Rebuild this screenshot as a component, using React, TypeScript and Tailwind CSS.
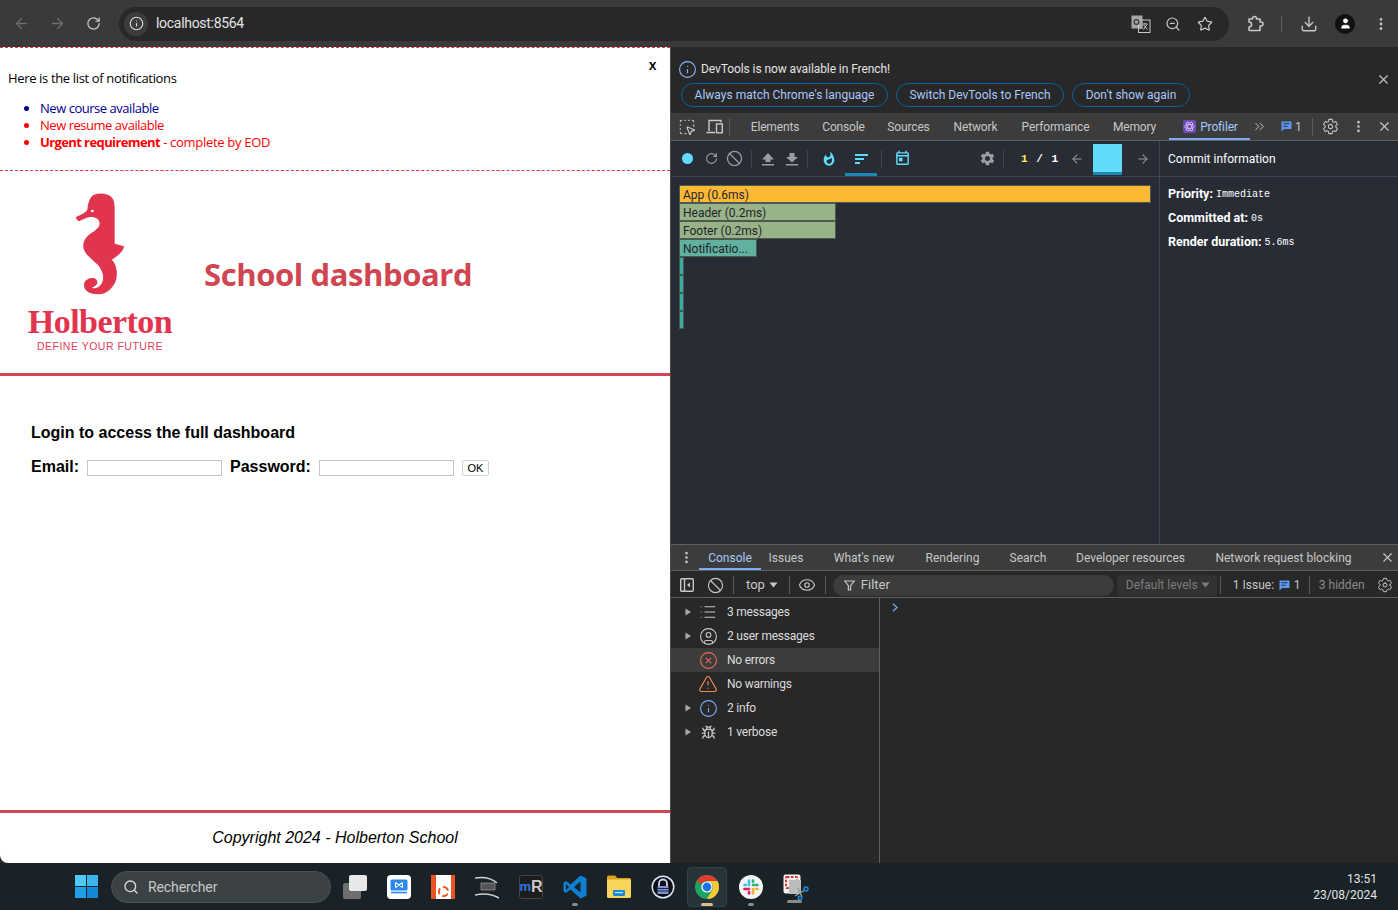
import {
  ArrowLeft,
  ArrowRight,
  RotateCw,
  Info,
  ZoomOut,
  Star,
  Download,
  User,
  EllipsisVertical,
  X,
  ChevronsRight,
  Ban,
  Eye,
  List,
  CircleUser,
  CircleX,
  TriangleAlert,
  Bug,
  Search,
  SquareDashedMousePointer,
} from "lucide-react";
import { MdSettings, MdWhatshot, MdOutlineToday } from "react-icons/md";
import { IoSettingsOutline } from "react-icons/io5";

const uiFont = "font-['Roboto','Liberation_Sans',sans-serif]";

const Divider = ({ className }: { className: string }) => (
  <div className={`w-px h-[18px] bg-[#5a5a5a] shrink-0 ${className}`} />
);

const Caret = ({ className }: { className: string }) => (
  <svg width="8" height="8" viewBox="0 0 8 8" className={className}>
    <path d="M1.5 0.5 L7 4 L1.5 7.5 Z" fill="#a8a8a8" />
  </svg>
);

const DownCaret = ({ className }: { className: string }) => (
  <svg width="9" height="6" viewBox="0 0 9 6" className={className}>
    <path d="M0.5 0.5 H8.5 L4.5 5.5 Z" fill="currentColor" />
  </svg>
);

const IssueIcon = ({ className }: { className: string }) => (
  <svg width="11" height="11" viewBox="0 0 11 11" className={`shrink-0 ${className}`}>
    <path d="M0.5 0.5 H10.5 V8 H3 L0.5 10.5 Z" fill="#5f97f0" />
    <path d="M2.5 2.8 H8.5 M2.5 5.2 H6.5" stroke="#20304c" strokeWidth="1.1" />
  </svg>
);

const TranslateIcon = () => (
  <svg width="20" height="18" viewBox="0 0 20 18">
    <rect x="0.5" y="0.5" width="11" height="13" fill="#a6a6a6" />
    <rect x="7.5" y="5" width="11.5" height="12.5" fill="none" stroke="#c7c7c7" />
    <path d="M8.3 5 H11.5 V14 H8.3 Z" fill="#a6a6a6" />
    <circle cx="5.5" cy="7" r="2.4" fill="none" stroke="#333" strokeWidth="1.2" />
    <path d="M11.5 9 H16.5 M14 8 V9 M12.5 14.5 L16 9.5 M12.5 9.8 L16.5 14.5" stroke="#c7c7c7" strokeWidth="1" fill="none" />
  </svg>
);

const ExtensionIcon = ({ className }: { className: string }) => (
  <svg width="18" height="18" viewBox="0 0 18 18" className={className}>
    <path
      d="M3 4 H6.5 V3.5 a2 2 0 0 1 4 0 V4 H14 V7 H15 a2 2 0 0 1 0 4 H14 V15.5 H3.5 L3 15 V12 a2.5 2.5 0 0 0 0 -5 Z"
      fill="none"
      stroke="currentColor"
      strokeWidth="1.6"
      strokeLinejoin="round"
    />
  </svg>
);

const DeviceIcon = ({ className }: { className: string }) => (
  <svg width="17" height="15" viewBox="0 0 17 15" className={className}>
    <path d="M3 12 V1.5 H15 V3.5 M0.5 13.5 H9" fill="none" stroke="#c7c7c7" strokeWidth="1.4" />
    <rect x="10.5" y="5" width="5.8" height="8.8" fill="none" stroke="#c7c7c7" strokeWidth="1.4" />
  </svg>
);

const PanelIcon = ({ className }: { className: string }) => (
  <svg width="14" height="14" viewBox="0 0 14 14" className={className}>
    <rect x="0.7" y="0.7" width="12.6" height="12.6" rx="1" fill="none" stroke="#c7c7c7" strokeWidth="1.4" />
    <path d="M4.5 1 V13" stroke="#c7c7c7" strokeWidth="1.4" />
    <path d="M10 4.5 V9.5 L7 7 Z" fill="#c7c7c7" />
  </svg>
);

const Seahorse = () => (
  <svg width="50" height="102" viewBox="225 38 150 306" className="shrink-0">
    <path
      d="M228 110 C240 104 256 98 262 88 C264 70 268 50 282 43 C300 37 325 39 336 52 C344 62 344 75 344 90 L344 190 L372 198 C370 214 352 228 335 238 C348 250 352 270 350 290 C346 318 322 342 295 342 C270 342 252 332 252 315 C252 300 266 291 280 293 C293 295 296 310 286 316 C282 319 278 320 276 322 C288 327 300 320 306 308 C314 290 308 272 294 254 C280 240 258 226 251 205 C246 186 258 168 274 158 C290 148 302 138 298 124 C294 112 278 108 265 111 C254 114 244 120 238 122 C232 122 228 116 228 110 Z"
      fill="#e0344f"
    />
    <circle cx="277" cy="92" r="4" fill="#ffffff" />
  </svg>
);

const Notifications = () => (
  <div className="relative h-[124px] border-y border-dashed border-[#e0344f] font-['Open_Sans','Noto_Sans',sans-serif] tracking-[-0.35px] text-[13px] text-black">
    <button className="absolute right-[14px] top-[8px] text-[14px] font-semibold leading-[18px]">x</button>
    <p className="pl-2 pt-[21px] leading-[18px]">Here is the list of notifications</p>
    <ul className="mt-[13px] pl-10 list-disc leading-[17px]">
      <li className="text-[#00008b] tracking-[-0.47px]">New course available</li>
      <li className="text-[#ff0000] tracking-[-0.47px]">New resume available</li>
      <li className="text-[#ff0000] tracking-[-0.3px]">
        <strong className="tracking-[-0.6px]">Urgent requirement</strong> - complete by EOD
      </li>
    </ul>
  </div>
);

const Logo = () => (
  <div className="w-[200px] h-full flex flex-col items-center pt-[22px] shrink-0">
    <Seahorse />
    <div className="mt-[7px] font-['Liberation_Serif',serif] font-bold text-[34px] leading-[40px] tracking-[-0.55px] text-[#e0344f]">Holberton</div>
    <div className="-mt-[2px] font-['Liberation_Sans',sans-serif] text-[10.5px] leading-[13px] tracking-[0.5px] text-[#e0405c]">DEFINE YOUR FUTURE</div>
  </div>
);

const LeftPage = () => (
  <div className="w-[670px] h-full flex flex-col bg-white rounded-bl-lg overflow-hidden shrink-0">
    <Notifications />
    <header className="h-[205px] flex items-center border-b-[3px] border-[#cf4550] shrink-0">
      <Logo />
      <h1 className="ml-[4px] mt-[4px] font-['Open_Sans','Noto_Sans',sans-serif] font-bold text-[31px] tracking-[-0.4px] text-[#cf4550]">School dashboard</h1>
    </header>
    <main className="flex-1 pl-[31px] pt-[47px] font-['Liberation_Sans',sans-serif] text-black">
      <p className="font-bold text-[16px] leading-[20px]">Login to access the full dashboard</p>
      <div className="mt-[14px] flex items-center font-bold text-[16px] leading-[20px]">
        <label>Email:</label>
        <input className="ml-[8px] mt-[2px] w-[135px] h-[16px] border border-[#c4c4c4] bg-white" />
        <label className="ml-[8px]">Password:</label>
        <input className="ml-[8px] mt-[2px] w-[135px] h-[16px] border border-[#c4c4c4] bg-white" />
        <button className="ml-[8px] mt-[2px] w-[27px] h-[16px] rounded-[2px] border border-[#d0d0d0] bg-white font-normal text-[11px] leading-[14px]">OK</button>
      </div>
    </main>
    <footer className="h-[53px] border-t-[3px] border-[#cf4550] flex items-center justify-center font-['Liberation_Sans',sans-serif] italic text-[16px] text-black shrink-0">
      Copyright 2024 - Holberton School
    </footer>
  </div>
);

const BrowserBar = () => (
  <div className="h-[47px] bg-[#3a3a3a] flex items-center shrink-0 text-[#c7c7c7]">
    <ArrowLeft size={17} strokeWidth={1.8} className="ml-[13px] text-[#6d6d6d]" />
    <ArrowRight size={17} strokeWidth={1.8} className="ml-[19px] text-[#6d6d6d]" />
    <RotateCw size={15} strokeWidth={2} className="ml-[20px]" />
    <div className="ml-[18px] w-[1110px] h-[34px] rounded-full bg-[#282828] flex items-center pl-[5px]">
      <div className="w-[24px] h-[24px] rounded-full bg-[#3c3c3c] flex items-center justify-center">
        <Info size={15} strokeWidth={1.8} className="text-[#dcdcdc]" />
      </div>
      <span className={`ml-[8px] text-[14px] tracking-[-0.3px] text-[#e3e3e3] ${uiFont}`}>localhost:8564</span>
      <div className="ml-auto flex items-center mr-[16px]">
        <TranslateIcon />
        <ZoomOut size={16} strokeWidth={1.8} className="ml-[14px]" />
        <Star size={16} strokeWidth={1.8} className="ml-[16px]" />
      </div>
    </div>
    <ExtensionIcon className="ml-[17px]" />
    <div className="ml-[17px] w-px h-[16px] bg-[#606060]" />
    <Download size={18} strokeWidth={1.8} className="ml-[18px]" />
    <div className="ml-[17px] w-[20px] h-[20px] rounded-full bg-[#111] flex items-center justify-center">
      <User size={13} fill="#ffffff" strokeWidth={1} className="text-white" />
    </div>
    <EllipsisVertical size={16} strokeWidth={2.2} className="ml-[18px]" />
  </div>
);

const mainTabs = [
  { label: "Elements", w: "w-[70px]" },
  { label: "Console", w: "w-[67px]" },
  { label: "Sources", w: "w-[63px]" },
  { label: "Network", w: "w-[71px]" },
  { label: "Performance", w: "w-[89px]" },
  { label: "Memory", w: "w-[69px]" },
];

const InfoBar = () => (
  <div className="h-[66px] bg-[#282828] relative shrink-0 pl-[7px] pt-[13px]">
    <div className="flex items-center h-[18px]">
      <Info size={19} strokeWidth={1.4} className="text-[#8ab4f8]" />
      <span className="ml-[4px] tracking-[-0.08px] text-[#e3e3e3]">DevTools is now available in French!</span>
    </div>
    <div className="flex mt-[5px] ml-[3px] gap-[8px] text-[#a8c7fa]">
      <button className="h-[24px] w-[207px] rounded-full border border-[#06639c]">Always match Chrome's language</button>
      <button className="h-[24px] w-[168px] rounded-full border border-[#06639c]">Switch DevTools to French</button>
      <button className="h-[24px] w-[118px] rounded-full border border-[#06639c]">Don't show again</button>
    </div>
    <X size={15} strokeWidth={1.8} className="absolute right-[7px] top-[25px] text-[#c7c7c7]" />
  </div>
);

const MainTabs = () => (
  <div className="h-[28px] bg-[#3c3c3c] border-b border-[#5f5f5f] flex items-center shrink-0 text-[#c7c7c7]">
    <SquareDashedMousePointer size={18} strokeWidth={1.5} className="ml-[7px]" />
    <DeviceIcon className="ml-[10px]" />
    <Divider className="ml-[6px]" />
    <div className="flex h-full ml-[10px] tracking-[-0.15px]">
      {mainTabs.map((t) => (
        <div key={t.label} className={`${t.w} flex items-center justify-center`}>{t.label}</div>
      ))}
      <div className="w-[81px] flex items-center justify-center border-b-2 border-[#7cacf8] pt-[2px] pl-[2px] text-[#a8c7fa]">
        <svg width="13" height="13" viewBox="0 0 13 13" className="mr-[4px]">
          <rect width="13" height="13" rx="2" fill="#6f4bb8" />
          <g fill="none" stroke="#d9c8ff" strokeWidth="0.8">
            <ellipse cx="6.5" cy="6.5" rx="5" ry="2" />
            <ellipse cx="6.5" cy="6.5" rx="5" ry="2" transform="rotate(60 6.5 6.5)" />
            <ellipse cx="6.5" cy="6.5" rx="5" ry="2" transform="rotate(120 6.5 6.5)" />
          </g>
        </svg>
        Profiler
      </div>
    </div>
    <ChevronsRight size={15} strokeWidth={1.6} className="ml-[2px]" />
    <IssueIcon className="ml-[14px]" />
    <span className="ml-[3px]">1</span>
    <Divider className="ml-[10px]" />
    <IoSettingsOutline size={17} className="ml-[9px]" />
    <EllipsisVertical size={15} strokeWidth={2.2} className="ml-[12px]" />
    <X size={15} strokeWidth={1.8} className="ml-[11px]" />
  </div>
);

const ProfilerToolbar = () => (
  <div className="h-[36px] bg-[#282c34] border-b border-[#3e4452] flex shrink-0 text-[#9a9da3]">
    <div className="w-[488px] flex items-center">
      <div className="ml-[11px] w-[11px] h-[11px] rounded-full bg-[#61dafb]" />
      <RotateCw size={13} strokeWidth={2} className="ml-[12px]" />
      <Ban size={17} strokeWidth={1.8} className="ml-[8px]" />
      <div className="ml-[8px] w-px h-[18px] bg-[#3e4452]" />
      <svg width="14" height="14" viewBox="0 0 14 14" className="ml-[9px]">
        <path d="M7 1 L13 7.5 H9.5 V10 H4.5 V7.5 H1 Z M1 12 H13 V13.5 H1 Z" fill="currentColor" />
      </svg>
      <svg width="14" height="14" viewBox="0 0 14 14" className="ml-[10px]">
        <path d="M4.5 1 H9.5 V5 H13 L7 10.5 L1 5 H4.5 Z M1 12 H13 V13.5 H1 Z" fill="currentColor" />
      </svg>
      <div className="ml-[8px] w-px h-[18px] bg-[#3e4452]" />
      <MdWhatshot size={16} className="ml-[13px] text-[#61dafb]" />
      <div className="ml-[8px] w-[32px] h-full flex items-center justify-center border-b-[3px] border-[#1a8ab5] pt-[3px]">
        <svg width="13" height="12" viewBox="0 0 13 12">
          <path d="M0 1 H13 V3 H0 Z M0 5 H9 V7 H0 Z M0 9 H5 V11 H0 Z" fill="#61dafb" />
        </svg>
      </div>
      <div className="ml-[4px] w-px h-[18px] bg-[#3e4452]" />
      <MdOutlineToday size={17} className="ml-[12px] text-[#61dafb]" />
      <MdSettings size={17} className="ml-[68px]" />
      <div className="ml-[7px] w-px h-[18px] bg-[#3e4452]" />
      <div className="ml-[17px] w-[37px] pt-[2px] flex justify-between font-['Liberation_Mono',monospace] font-bold text-[11px] text-white">
        <span className="text-[#ffee55]">1</span>
        <span>/</span>
        <span>1</span>
      </div>
      <ArrowLeft size={14} strokeWidth={1.8} className="ml-[12px]" />
      <div className="ml-[9px] w-[29px] h-[31px] bg-[#61dafb] border-b-[3px] border-[#1a8ab5] self-end mb-[1px]" />
      <ArrowRight size={14} strokeWidth={1.8} className="ml-[14px]" />
    </div>
    <div className="flex-1 border-l border-[#3e4452] pl-[8px] flex items-center text-white">Commit information</div>
  </div>
);

const FlameRow = ({ w, bg, label }: { w: string; bg: string; label: string }) => (
  <div className={`${w} ${bg} h-[18px] border border-[#4a5a50] pl-[3px] leading-[18px] text-[#1f242c] overflow-hidden whitespace-nowrap`}>
    {label}
  </div>
);

const CommitRow = ({ label, value }: { label: string; value: string }) => (
  <div className="h-[24px] flex items-center gap-[3px]">
    <b className="font-bold text-[12.5px]">{label}</b>
    <span className="font-['Liberation_Mono',monospace] text-[10px]">{value}</span>
  </div>
);

const ProfilerBody = () => (
  <div className="h-[367px] bg-[#282c34] flex shrink-0">
    <div className="w-[488px] pl-[8px] pt-[8px] flex flex-col">
      <FlameRow w="w-[472px]" bg="bg-[#fdb934]" label="App (0.6ms)" />
      <FlameRow w="w-[157px]" bg="bg-[#98b388]" label="Header (0.2ms)" />
      <FlameRow w="w-[157px]" bg="bg-[#98b388]" label="Footer (0.2ms)" />
      <FlameRow w="w-[78px]" bg="bg-[#62b0a0]" label="Notificatio..." />
      <FlameRow w="w-[5px]" bg="bg-[#37aba3]" label="" />
      <FlameRow w="w-[5px]" bg="bg-[#37aba3]" label="" />
      <FlameRow w="w-[5px]" bg="bg-[#37aba3]" label="" />
      <FlameRow w="w-[5px]" bg="bg-[#37aba3]" label="" />
    </div>
    <div className="flex-1 border-l border-[#3e4452] pl-[8px] pt-[5px] text-white">
      <CommitRow label="Priority:" value="Immediate" />
      <CommitRow label="Committed at:" value="0s" />
      <CommitRow label="Render duration:" value="5.6ms" />
    </div>
  </div>
);

const drawerTabs = [
  { label: "Issues", w: "w-[50px]" },
  { label: "What's new", w: "w-[106px]" },
  { label: "Rendering", w: "w-[71px]" },
  { label: "Search", w: "w-[80px]" },
  { label: "Developer resources", w: "w-[125px]" },
  { label: "Network request blocking", w: "w-[181px]" },
];

const DrawerTabs = () => (
  <div className="h-[27px] bg-[#3c3c3c] border-y border-[#5f5f5f] flex items-center shrink-0 text-[#c7c7c7]">
    <EllipsisVertical size={15} strokeWidth={2.2} className="ml-[8px]" />
    <div className="ml-[5px] w-[62px] h-full flex items-center justify-center border-b-2 border-[#7cacf8] pt-[2px] text-[#a8c7fa]">Console</div>
    <div className="flex h-full">
      {drawerTabs.map((t) => (
        <div key={t.label} className={`${t.w} flex items-center justify-center whitespace-nowrap`}>{t.label}</div>
      ))}
    </div>
    <X size={15} strokeWidth={1.8} className="ml-[6px]" />
  </div>
);

const ConsoleToolbar = () => (
  <div className="h-[27px] pt-[2px] bg-[#282828] border-b border-[#5f5f5f] flex items-center shrink-0 text-[#c7c7c7]">
    <PanelIcon className="ml-[9px]" />
    <Ban size={17} strokeWidth={1.6} className="ml-[13px]" />
    <Divider className="ml-[9px]" />
    <span className="ml-[12px] text-[13px]">top</span>
    <DownCaret className="ml-[4px]" />
    <Divider className="ml-[11px]" />
    <Eye size={18} strokeWidth={1.5} className="ml-[8px]" />
    <Divider className="ml-[9px]" />
    <div className="ml-[7px] w-[281px] h-[21px] rounded-full bg-[#3c3c3c] flex items-center pl-[11px]">
      <svg width="11" height="11" viewBox="0 0 11 11">
        <path d="M0.8 1 H10.2 L6.6 5.6 V10 H4.4 V5.6 Z" fill="none" stroke="#c7c7c7" strokeWidth="1.2" />
      </svg>
      <span className="ml-[6px] text-[13px]">Filter</span>
    </div>
    <div className="ml-[3px] w-[100px] h-[21px] rounded-[4px] bg-[#323232] flex items-center pl-[9px] text-[#7c7c7c] whitespace-nowrap">
      Default levels
      <DownCaret className="ml-auto mr-[7px]" />
    </div>
    <Divider className="ml-[3px]" />
    <span className="ml-[12px] w-[39px] whitespace-nowrap shrink-0">1 Issue:</span>
    <IssueIcon className="ml-[7px]" />
    <span className="ml-[4px] w-[7px] shrink-0">1</span>
    <Divider className="ml-[8px]" />
    <span className="ml-[9px] w-[47px] whitespace-nowrap shrink-0 text-[#8a8a8a]">3 hidden</span>
    <IoSettingsOutline size={16} className="ml-[11px] shrink-0" />
  </div>
);

const SidebarRow = ({
  expand,
  icon,
  label,
  active,
}: {
  expand: boolean;
  icon: React.ReactNode;
  label: string;
  active?: boolean;
}) => (
  <div className={`h-[24px] flex items-center ${active ? "bg-[#3c3c3c]" : ""}`}>
    <div className="w-[27px] flex justify-end pr-[6px] shrink-0">{expand && <Caret className="" />}</div>
    <div className="w-[20px] flex justify-center shrink-0">{icon}</div>
    <span className="ml-[9px] tracking-[-0.22px] text-[#dcdcdc]">{label}</span>
  </div>
);

const ConsolePanel = () => (
  <div className="flex-1 bg-[#282828] flex min-h-0">
    <div className="w-[209px] border-r border-[#5f5f5f] pt-[2px] shrink-0">
      <SidebarRow expand icon={<List size={18} strokeWidth={1.6} className="text-[#c7c7c7]" />} label="3 messages" />
      <SidebarRow expand icon={<CircleUser size={19} strokeWidth={1.4} className="text-[#c7c7c7]" />} label="2 user messages" />
      <SidebarRow expand={false} active icon={<CircleX size={19} strokeWidth={1.4} className="text-[#e46962]" />} label="No errors" />
      <SidebarRow expand={false} icon={<TriangleAlert size={20} strokeWidth={1.4} className="text-[#f28b54]" />} label="No warnings" />
      <SidebarRow expand icon={<Info size={19} strokeWidth={1.4} className="text-[#7cacf8]" />} label="2 info" />
      <SidebarRow expand icon={<Bug size={15} strokeWidth={2} className="text-[#c7c7c7]" />} label="1 verbose" />
    </div>
    <svg width="6" height="9" viewBox="0 0 6 9" className="ml-[12px] mt-[5px]">
      <path d="M1 0.8 L5 4.5 L1 8.2" fill="none" stroke="#7cacf8" strokeWidth="1.2" />
    </svg>
  </div>
);

const DevTools = () => (
  <div className={`flex-1 h-full flex flex-col border-l border-[#494949] text-[12px] ${uiFont}`}>
    <InfoBar />
    <MainTabs />
    <ProfilerToolbar />
    <ProfilerBody />
    <DrawerTabs />
    <ConsoleToolbar />
    <ConsolePanel />
  </div>
);

const ChromeIcon = () => (
  <svg width="24" height="24" viewBox="0 0 24 24">
    <circle cx="12" cy="12" r="12" fill="#1ea362" />
    <path d="M12 0 A12 12 0 0 1 22.4 6 L12 6 A6 6 0 0 0 6.8 9 L1.6 6 A12 12 0 0 1 12 0 Z" fill="#e33b2e" />
    <path d="M22.4 6 A12 12 0 0 1 12 24 L17.2 15 A6 6 0 0 0 17.2 9 L12 6 Z" fill="#fcc934" />
    <circle cx="12" cy="12" r="5.6" fill="#ffffff" />
    <circle cx="12" cy="12" r="4.4" fill="#1a73e8" />
  </svg>
);

const SlackIcon = () => (
  <svg width="24" height="24" viewBox="0 0 24 24">
    <circle cx="12" cy="12" r="12" fill="#f4f4f4" />
    <g strokeWidth="2.6" strokeLinecap="round" fill="none">
      <path d="M10 5.5 V10 M5.5 10 H7" stroke="#36c5f0" />
      <path d="M18.5 10 H14 M14 5.5 V7" stroke="#2eb67d" />
      <path d="M14 18.5 V14 M18.5 14 H17" stroke="#ecb22e" />
      <path d="M5.5 14 H10 M10 18.5 V17" stroke="#e01e5a" />
    </g>
  </svg>
);

const VSCodeIcon = () => (
  <svg width="24" height="24" viewBox="0 0 24 24">
    <path d="M17.5 0.5 L23.5 3.2 V20.8 L17.5 23.5 L7.5 14.4 L3 18 L0.5 16.6 V7.4 L3 6 L7.5 9.6 Z M17.5 6.5 L11 12 L17.5 17.5 Z M3 9 V15 L6 12 Z" fill="#0f7fd0" />
  </svg>
);

const FolderIcon = () => (
  <svg width="24" height="23" viewBox="0 0 24 23">
    <path d="M0 2 Q0 0.5 1.5 0.5 H8 L10.5 3 H22.5 Q24 3 24 4.5 V8 H0 Z" fill="#dba01e" />
    <path d="M0 4.5 H24 V21.5 Q24 23 22.5 23 H1.5 Q0 23 0 21.5 Z" fill="#fad55c" />
    <rect x="6" y="15" width="12" height="6" rx="1" fill="#1a88d8" />
    <rect x="8" y="17" width="8" height="1.2" fill="#bfe3fb" />
  </svg>
);

const LockIcon = () => (
  <svg width="24" height="24" viewBox="0 0 24 24">
    <circle cx="12" cy="12" r="11.5" fill="#dfe4f4" />
    <circle cx="12" cy="12" r="10" fill="#0c0c14" />
    <path d="M8 11 V8.5 A4 4 0 0 1 16 8.5 V11" fill="none" stroke="#c9d4f0" strokeWidth="1.8" />
    <rect x="6.5" y="11" width="11" height="8" rx="1" fill="#7f94cc" />
    <path d="M6.5 13.5 H17.5 M6.5 16 H17.5" stroke="#1c2340" strokeWidth="1" />
  </svg>
);

const SnipIcon = () => (
  <svg width="26" height="26" viewBox="0 0 26 26">
    <rect x="0.5" y="0.5" width="17" height="19" rx="2" fill="#f2f2f2" />
    <rect x="3" y="3" width="11" height="11" rx="1" fill="none" stroke="#d8352a" strokeWidth="2" strokeDasharray="2.5 1.5" />
    <rect x="6" y="6" width="12" height="14" fill="#bcbcbc" />
    <path d="M12 22 L22 16 M15 14 L19 23" stroke="#9a9a9a" strokeWidth="1.4" />
    <circle cx="23" cy="15" r="2" fill="none" stroke="#1a88d8" strokeWidth="1.6" />
    <circle cx="17" cy="24" r="1.7" fill="none" stroke="#1a88d8" strokeWidth="1.6" />
  </svg>
);

const Taskbar = () => (
  <div className="h-[47px] bg-[#192226] flex items-center shrink-0 font-['Roboto',sans-serif] relative">
    <div className="ml-[75px] w-[23px] h-[23px] grid grid-cols-2 gap-[1px]">
      <div className="bg-[#52c8f8]" />
      <div className="bg-[#3cb4ee]" />
      <div className="bg-[#20a0e4]" />
      <div className="bg-[#1488d8]" />
    </div>
    <div className="ml-[13px] w-[220px] h-[32px] rounded-full bg-[#3c4244] border border-[#4a5052] flex items-center pl-[11px]">
      <Search size={16} strokeWidth={2} className="text-[#dcdcdc]" />
      <span className="ml-[9px] pt-[1px] text-[14px] tracking-[-0.1px] text-[#c8c8c8]">Rechercher</span>
    </div>
    <div className="ml-[12px] w-[24px] h-[24px] relative shrink-0">
      <div className="absolute left-0 bottom-0 w-[18px] h-[16px] bg-[#6e6e6e] rounded-[2px]" />
      <div className="absolute right-0 top-0 w-[18px] h-[16px] bg-[#e8e8e8] rounded-[2px]" />
    </div>
    <div className="ml-[20px] w-[24px] h-[24px] bg-white rounded-[4px] flex items-center justify-center shrink-0">
      <svg width="18" height="15" viewBox="0 0 18 15">
        <rect x="0.5" y="0.5" width="17" height="11" rx="1.5" fill="#2a88ee" />
        <path d="M1 13.5 H17" stroke="#2a88ee" strokeWidth="1.6" />
        <path d="M5.5 3.5 L12.5 8.5 M5.5 8.5 L12.5 3.5 M5.5 3.5 V8.5 M12.5 3.5 V8.5" stroke="#ffffff" strokeWidth="1.1" fill="none" />
      </svg>
    </div>
    <div className="ml-[20px] w-[24px] h-[24px] bg-[#e95420] flex items-center justify-center shrink-0">
      <div className="w-[15px] h-[24px] bg-white flex items-end justify-center pb-[2px]">
        <div className="w-[11px] h-[11px] rounded-full border-2 border-dashed border-[#e95420]" />
      </div>
    </div>
    <svg width="24" height="24" viewBox="0 0 24 24" className="ml-[20px] shrink-0">
      <path d="M0 3 Q14 1 22 8 M0 20 Q14 17 24 23" fill="none" stroke="#d0d0d0" strokeWidth="1.6" />
      <rect x="6" y="8" width="14" height="7" fill="#555" stroke="#aaa" strokeWidth="0.6" />
    </svg>
    <div className="ml-[20px] w-[24px] h-[24px] rounded-[3px] bg-[#1c1c1c] border border-[#444] flex items-center justify-center font-['Liberation_Sans',sans-serif] font-bold leading-none shrink-0">
      <span className="text-[13px] text-[#2f74e6]">m</span>
      <span className="text-[16px] text-[#c8c8c8]">R</span>
    </div>
    <div className="ml-[20px] shrink-0 relative"><VSCodeIcon /><div className="absolute left-[9px] top-[28px] w-[6px] h-[3px] rounded-full bg-[#8a8a8a]" /></div>
    <div className="ml-[20px] shrink-0"><FolderIcon /></div>
    <div className="ml-[20px] shrink-0"><LockIcon /></div>
    <div className="ml-[12px] w-[40px] h-[40px] rounded-[4px] bg-[#26343a] border border-[#30404a] flex items-center justify-center relative shrink-0">
      <ChromeIcon />
      <div className="absolute left-[13px] bottom-[0px] w-[12px] h-[3px] rounded-full bg-[#d9c08c]" />
    </div>
    <div className="ml-[12px] shrink-0 relative"><SlackIcon /><div className="absolute left-[9px] top-[28px] w-[6px] h-[3px] rounded-full bg-[#8a8a8a]" /></div>
    <div className="ml-[20px] shrink-0 relative"><SnipIcon /><div className="absolute left-[4px] top-[26px] w-[15px] h-[3px] rounded-full bg-[#8a8a8a]" /></div>
    <div className="ml-auto mr-[21px] text-right text-[12px] leading-[16px] text-[#e4e4e4]">
      <div>13:51</div>
      <div>23/08/2024</div>
    </div>
  </div>
);

export default function App() {
  return (
    <div className="w-[1398px] h-[910px] bg-[#282828] flex flex-col overflow-hidden">
      <BrowserBar />
      <div className="h-[816px] flex">
        <LeftPage />
        <DevTools />
      </div>
      <Taskbar />
    </div>
  );
}
